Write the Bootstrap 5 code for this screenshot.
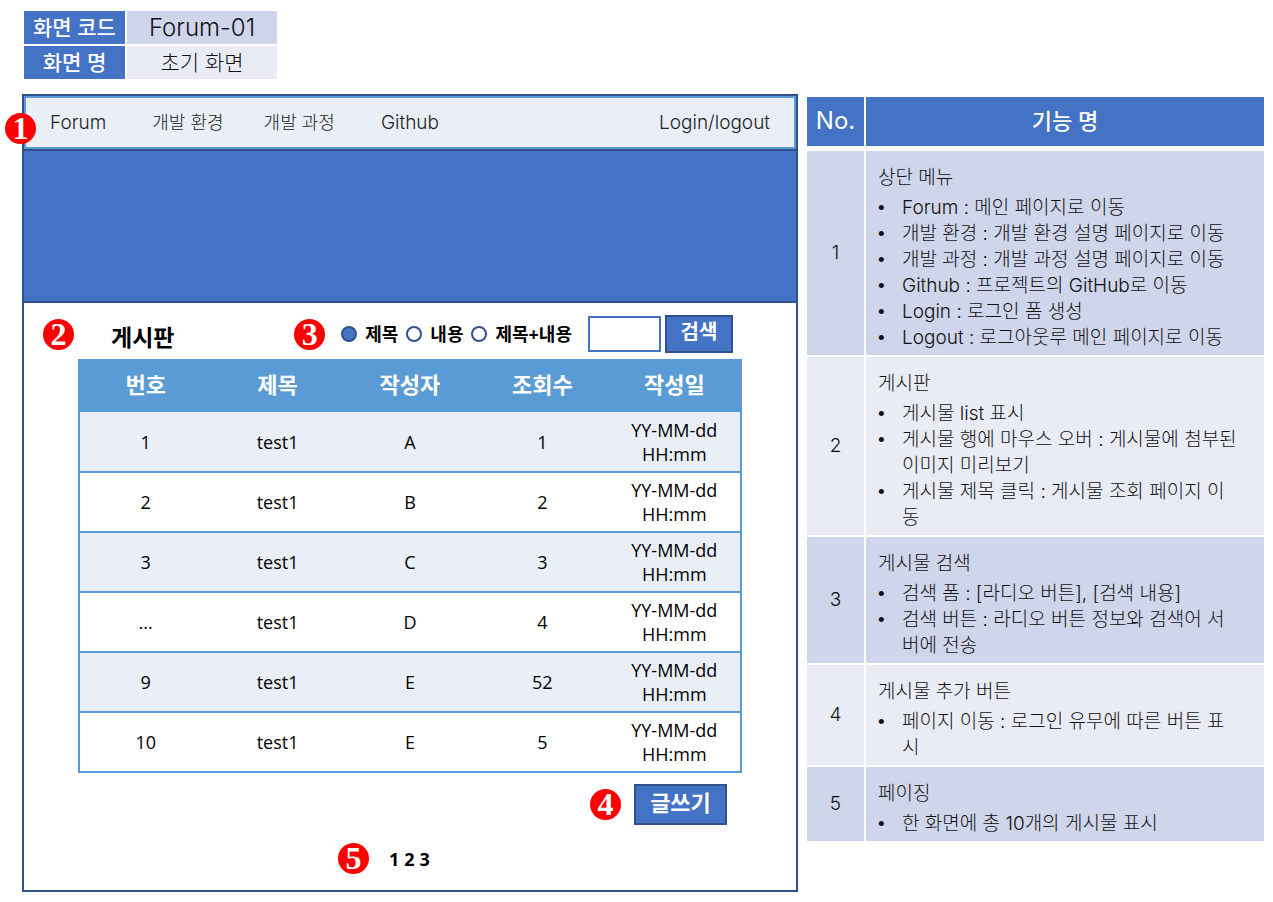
<!DOCTYPE html>
<html lang="ko">
<head>
<meta charset="utf-8">
<meta name="viewport" content="width=device-width, initial-scale=1">
<title>Forum-01 초기 화면</title>
<link href="https://cdn.jsdelivr.net/npm/bootstrap@5.3.0/dist/css/bootstrap.min.css" rel="stylesheet">
<style>
  :root { --blue: #4472c4; --navy: #2f528f; --sky: #5b9bd5; --tint: #e9eef7; --band-a: #cfd5ea; --band-b: #e9ebf5; }
  body { font-family: Inter, "Noto Sans CJK KR", sans-serif; font-weight: 300; font-size: 19px; line-height: 26px; color: #111; background: #fff; }
  header { padding-top: 9px; }
  .code-table { width: 257px; margin-left: 22px; border-collapse: separate; border-spacing: 2px 2px; font-size: 21px; line-height: 33px; text-align: center; }
  .code-table th { width: 101px; background: var(--blue); color: #fff; font-weight: 500; padding: 0; }
  .code-table td { background: var(--band-b); padding: 0; }
  .code-table tr:first-child td { background: var(--band-a); font-size: 24px; }
  .layout { display: grid; grid-template-columns: 776fr 457fr; gap: 9px; margin-top: 13px; padding: 0 9px 10px 22px; }
  .screen { border: 2px solid var(--navy); }
  .menu { background: var(--tint); border: 2px solid var(--sky); height: 53px; padding: 0 24px; gap: 46px; }
  .menu a { color: #222; text-decoration: none; }
  .menu a:nth-of-type(2), .menu a:nth-of-type(3) { font-size: 18px; }
  .menu a:nth-of-type(3) { margin-left: -6px; }
  .hero { background: var(--blue); border-top: 2px solid var(--navy); border-bottom: 2px solid var(--navy); height: 154px; }
  .num { flex: none; width: 31px; height: 31px; border-radius: 50%; background: #f00; color: #fff; font: bold 32px/31px "Liberation Serif", serif; text-align: center; }
  .num-menu { left: -21px; top: 15px; }
  .calibri { font-family: "Open Sans", "Noto Sans CJK KR", sans-serif; font-weight: 400; color: #000; }
  .tools { padding: 12px 63px 6px 19px; }
  .tools h1 { font-size: 23px; line-height: 28px; font-weight: 700; margin: 6px 0 0 37px; }
  .tools label { font-weight: 700; font-size: 18px; line-height: 24px; }
  .tools .form-check-input { width: 16px; height: 16px; margin: 0; border: 2px solid var(--navy); background-image: none; }
  .tools .form-check-input:checked { background-color: var(--blue); }
  .tools .form-control { width: 73px; height: 36px; border: 2px solid var(--blue); border-radius: 0; padding: 0 6px; }
  .btn-flat { background: var(--blue); color: #fff; border: 2px solid var(--navy); border-radius: 0; padding: 0 0 4px; font-weight: 700; font-size: 20px; }
  .btn-search { width: 68px; height: 38px; line-height: 30px; }
  .btn-write { width: 93px; height: 41px; font-size: 22px; line-height: 33px; }
  .posts-wrap { margin: 0 54px; }
  .posts { width: 100%; table-layout: fixed; border: 2px solid var(--sky); border-collapse: collapse; text-align: center; font-size: 18px; line-height: 24px; }
  .posts th { background: var(--sky); color: #fff; font-size: 22px; font-weight: 700; height: 52px; padding: 0 0 6px; }
  .posts td { height: 60px; padding: 5px 0; border-bottom: 2px solid var(--sky); }
  .posts tbody tr:nth-child(odd) td { background: var(--tint); }
  .write { padding: 11px 69px 0 0; gap: 13px; }
  .pages { padding: 18px 0 16px 314px; gap: 20px; }
  .pages a { color: #000; text-decoration: none; font-weight: 700; font-size: 18px; }
  .spec { width: 100%; align-self: start; margin-top: 3px; border-collapse: collapse; }
  .spec th { background: var(--blue); color: #fff; font-size: 22px; font-weight: 500; height: 51px; padding: 0; text-align: center; border-bottom: 5px solid #fff; }
  .spec th:first-child { font-size: 24px; font-weight: 400; }
  .spec td { background: var(--band-b); padding: 14px 10px 4px 12px; border-bottom: 2px solid #fff; }
  .spec tr:nth-child(odd) td { background: var(--band-a); }
  .spec th:first-child, .spec td:first-child { width: 58px; padding: 0; text-align: center; border-right: 2px solid #fff; }
  .spec ul { list-style: none; margin: 4px 0 0; padding: 0; }
  .spec li { display: grid; grid-template-columns: 24px 1fr; }
  .spec li::before { content: "•"; font-family: "Liberation Sans", sans-serif; font-weight: 400; }
</style>
</head>
<body>
<header>
  <table class="code-table">
    <tr><th scope="row">화면 코드</th><td>Forum-01</td></tr>
    <tr><th scope="row">화면 명</th><td>초기 화면</td></tr>
  </table>
</header>
<main class="layout">
  <section class="screen">
    <nav class="menu d-flex align-items-center position-relative">
      <span class="num num-menu position-absolute">1</span>
      <a href="#">Forum</a>
      <a href="#">개발 환경</a>
      <a href="#">개발 과정</a>
      <a href="#">Github</a>
      <a href="#" class="ms-auto">Login/logout</a>
    </nav>
    <div class="hero"></div>
    <div class="calibri">
      <div class="tools d-flex align-items-center">
        <span class="num">2</span>
        <h1>게시판</h1>
        <form class="d-flex align-items-center ms-auto">
          <span class="num me-3">3</span>
          <input class="form-check-input" type="radio" name="field" id="f1" checked><label for="f1" class="ms-2 me-2">제목</label>
          <input class="form-check-input" type="radio" name="field" id="f2"><label for="f2" class="ms-2 me-2">내용</label>
          <input class="form-check-input" type="radio" name="field" id="f3"><label for="f3" class="ms-2 me-3">제목+내용</label>
          <input class="form-control me-1" type="text" aria-label="검색 내용">
          <button class="btn btn-flat btn-search" type="button">검색</button>
        </form>
      </div>
      <div class="posts-wrap">
        <table class="posts">
          <thead><tr><th>번호</th><th>제목</th><th>작성자</th><th>조회수</th><th>작성일</th></tr></thead>
          <tbody>
            <tr><td>1</td><td>test1</td><td>A</td><td>1</td><td>YY-MM-dd<br>HH:mm</td></tr>
            <tr><td>2</td><td>test1</td><td>B</td><td>2</td><td>YY-MM-dd<br>HH:mm</td></tr>
            <tr><td>3</td><td>test1</td><td>C</td><td>3</td><td>YY-MM-dd<br>HH:mm</td></tr>
            <tr><td>...</td><td>test1</td><td>D</td><td>4</td><td>YY-MM-dd<br>HH:mm</td></tr>
            <tr><td>9</td><td>test1</td><td>E</td><td>52</td><td>YY-MM-dd<br>HH:mm</td></tr>
            <tr><td>10</td><td>test1</td><td>E</td><td>5</td><td>YY-MM-dd<br>HH:mm</td></tr>
          </tbody>
        </table>
      </div>
      <div class="write d-flex justify-content-end align-items-center">
        <span class="num">4</span>
        <button class="btn btn-flat btn-write" type="button">글쓰기</button>
      </div>
      <div class="pages d-flex align-items-center">
        <span class="num">5</span>
        <div><a href="#">1</a> <a href="#">2</a> <a href="#">3</a></div>
      </div>
    </div>
  </section>
  <table class="spec">
    <thead><tr><th>No.</th><th>기능 명</th></tr></thead>
    <tbody>
      <tr><td>1</td><td>상단 메뉴
        <ul><li>Forum : 메인 페이지로 이동</li><li>개발 환경 : 개발 환경 설명 페이지로 이동</li><li>개발 과정 : 개발 과정 설명 페이지로 이동</li><li>Github : 프로젝트의 GitHub로 이동</li><li>Login : 로그인 폼 생성</li><li>Logout : 로그아웃루 메인 페이지로 이동</li></ul></td></tr>
      <tr><td>2</td><td>게시판
        <ul><li>게시물 list 표시</li><li><span>게시물 행에 마우스 오버 : 게시물에 첨부된<br>이미지 미리보기</span></li><li><span>게시물 제목 클릭 : 게시물 조회 페이지 이<br>동</span></li></ul></td></tr>
      <tr><td>3</td><td>게시물 검색
        <ul><li>검색 폼 : [라디오 버튼], [검색 내용]</li><li><span>검색 버튼 : 라디오 버튼 정보와 검색어 서<br>버에 전송</span></li></ul></td></tr>
      <tr><td>4</td><td>게시물 추가 버튼
        <ul><li><span>페이지 이동 : 로그인 유무에 따른 버튼 표<br>시</span></li></ul></td></tr>
      <tr><td>5</td><td>페이징
        <ul><li>한 화면에 총 10개의 게시물 표시</li></ul></td></tr>
    </tbody>
  </table>
</main>
<script src="https://cdn.jsdelivr.net/npm/bootstrap@5.3.0/dist/js/bootstrap.bundle.min.js"></script>
</body>
</html>
